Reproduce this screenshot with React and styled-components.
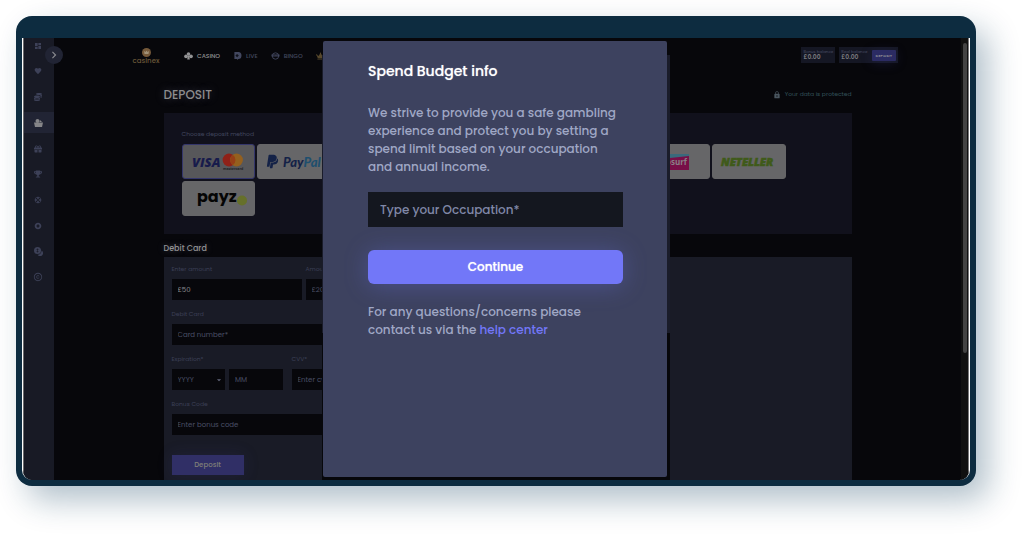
import React from 'react';
import styled, { createGlobalStyle } from 'styled-components';
import { MdDashboard, MdFavorite, MdChevronRight, MdLock, MdArrowDropDown, MdSupport, MdAlbum, MdCopyright } from 'react-icons/md';
import { FaGift, FaTrophy, FaCoins, FaCrown } from 'react-icons/fa';
import { FaPaypal } from 'react-icons/fa6';

const GlobalStyle = createGlobalStyle`
*{
box-sizing:border-box;
}
body{
margin:0;
background:#ffffff;
font-family:Poppins, Inter, "Liberation Sans", sans-serif;
}
button, input, select{
font-family:inherit;
border:0;
margin:0;
}
`;

const Page = styled.div`
display:flex;
height:100vh;
padding:16px 48px 48px 16px;
`;

const Frame = styled.div`
flex:1;
display:flex;
min-width:0;
padding:22px 6px 6px;
border-radius:16px;
background:#0d2c40;
box-shadow:12px 14px 32px rgba(13,60,90,0.32);
`;

const Screen = styled.div`
flex:1;
min-width:0;
display:flex;
position:relative;
overflow:hidden;
border:solid #ffffff;
border-width:0 1px;
border-radius:0 0 10px 10px;
background:#07070b;
`;

const Sidebar = styled.nav`
flex:none;
width:31px;
border-left:1px solid #6c6c6e;
background:#181a25;
`;

const SideList = styled.div`
display:flex;
flex-direction:column;
justify-content:space-between;
height:253px;
margin-top:-3px;
`;

const SideItem = styled.button`
display:flex;
align-items:center;
justify-content:center;
width:100%;
height:21px;
padding:0 2px 0 0;
font-size:8px;
color:${({ $active }) => ($active ? '#858588' : '#3d4158')};
background:${({ $active }) => ($active ? '#212434' : 'transparent')};
`;

const Toggle = styled.button`
position:absolute;
top:8px;
left:22px;
display:flex;
align-items:center;
justify-content:center;
width:18px;
height:18px;
padding:0;
border-radius:50%;
font-size:14px;
color:#8a8b90;
background:#212434;
`;

const Main = styled.main`
flex:1;
min-width:0;
`;

const Header = styled.header`
display:flex;
align-items:center;
height:34px;
padding:0 63px 0 79px;
`;

const Logo = styled.a`
display:flex;
flex-direction:column;
align-items:center;
width:26px;
padding-top:2px;
font-size:7px;
line-height:7px;
font-weight:500;
text-decoration:none;
color:#6b5839;
`;

const Nav = styled.nav`
flex:1;
display:flex;
gap:13px;
margin-left:25px;
padding-top:2px;
`;

const NavLink = styled.a`
display:flex;
align-items:center;
gap:4px;
font-size:6px;
font-weight:500;
text-decoration:none;
color:${({ $active }) => ($active ? '#929294' : '#42475f')};
svg{
width:9px;
height:8px;
}
`;

const Balances = styled.div`
display:flex;
gap:4px;
`;

const Balance = styled.div`
display:flex;
align-items:center;
gap:4px;
height:16px;
padding:0 2px;
white-space:nowrap;
background:#151724;
`;

const BalanceLabel = styled.div`
font-size:4px;
line-height:5px;
color:#4a4e66;
`;

const BalanceValue = styled.div`
font-size:6px;
line-height:7px;
font-weight:600;
color:#7c7c80;
`;

const SmallDeposit = styled.button`
height:11px;
padding:0 4px;
border-radius:1px;
font-size:4px;
font-weight:600;
color:#8a8a92;
background:#2b2b63;
box-shadow:0 2px 12px rgba(60,60,140,0.25);
`;

const Content = styled.div`
max-width:688px;
margin:0 auto;
`;

const TitleRow = styled.div`
display:flex;
align-items:center;
justify-content:space-between;
height:41px;
padding-top:4px;
`;

const Title = styled.h1`
margin:0;
font-size:12px;
font-weight:500;
color:#8c8c8e;
text-shadow:0 0 8px rgba(140,140,160,0.4);
`;

const Protected = styled.div`
display:flex;
align-items:center;
gap:4px;
font-size:6px;
color:#33525a;
svg{
font-size:8px;
color:#4a5660;
}
`;

const Methods = styled.section`
height:121px;
padding:17px 18px;
background:#11111c;
`;

const MethodLabel = styled.div`
height:14px;
font-size:6px;
line-height:8px;
color:#42475f;
`;

const MethodGrid = styled.div`
display:grid;
grid-template-columns:repeat(8, 1fr);
gap:2px;
max-width:604px;
`;

const Method = styled.button`
display:flex;
align-items:center;
justify-content:center;
height:35px;
padding:0;
border:1px solid ${({ $active }) => ($active ? '#34366b' : '#666668')};
border-radius:3px;
overflow:hidden;
background:${({ $active }) => ($active ? '#57575a' : '#666668')};
`;

const MethodArt = styled.svg`
flex:none;
width:72px;
height:33px;
`;

const SectionTitle = styled.h2`
display:flex;
align-items:center;
height:23px;
margin:0;
padding-top:6px;
font-size:8px;
font-weight:500;
color:#929294;
text-shadow:0 0 6px rgba(140,140,160,0.4);
`;

const FormPanel = styled.form`
display:flex;
flex-direction:column;
gap:10px;
height:300px;
padding:8px;
background:#191b26;
`;

const Row = styled.div`
display:flex;
gap:${({ $gap }) => $gap || 4}px;
width:300px;
`;

const Field = styled.div`
display:flex;
flex-direction:column;
gap:6px;
flex:${({ $w }) => ($w ? `0 0 ${$w}px` : 1)};
`;

const Label = styled.label`
font-size:6px;
line-height:8px;
color:#3c4056;
`;

const Input = styled.input`
width:100%;
height:21px;
padding:0 6px;
border-radius:0;
font-size:7px;
color:#8c8c90;
background:#07070b;
&::placeholder{
color:#4a4f66;
opacity:1;
}
`;

const Pair = styled.div`
display:flex;
gap:4px;
`;

const SelectWrap = styled.div`
flex:1;
display:flex;
align-items:center;
padding-right:1px;
font-size:10px;
color:#63677c;
background:#07070b;
`;

const Select = styled.select`
flex:1;
min-width:0;
height:21px;
padding:0 6px;
appearance:none;
font-size:7px;
color:#4a4f66;
background:transparent;
`;

const DepositButton = styled.button`
width:72px;
height:20px;
margin-top:10px;
font-size:7px;
font-weight:500;
color:#7f7f78;
background:#302f66;
box-shadow:0 0 16px rgba(60,60,140,0.2);
`;

const Scrollbar = styled.div`
flex:none;
width:8px;
padding:5px 1px 0 2px;
border-right:1px solid #777779;
background:#101010;
`;

const Thumb = styled.div`
height:71%;
border-radius:2px;
background:#434343;
`;

const Overlay = styled.div`
position:absolute;
inset:0;
display:flex;
justify-content:center;
`;

const Shade = styled.div`
display:flex;
width:348px;
padding:3px 3px 3px 1px;
background:linear-gradient(#07070b 17px, #1a1c2a 17px, #1a1c2a 295px, #07070b 295px);
`;

const Dialog = styled.div`
flex:1;
padding:20px 44px 0 45px;
border-radius:2px;
background:#3d425f;
`;

const DialogTitle = styled.h2`
margin:0 0 23px;
font-size:14px;
line-height:20px;
font-weight:500;
color:#ffffff;
text-shadow:0 0 1px rgba(255,255,255,0.6);
`;

const Text = styled.p`
margin:0;
font-size:12px;
line-height:18px;
font-weight:500;
color:#a0a8c6;
`;

const Occupation = styled.input`
width:100%;
height:35px;
margin:16px 0 23px;
padding:0 12px;
border-radius:0;
font-size:12px;
font-weight:500;
color:#a0a8c6;
background:#14171f;
&::placeholder{
color:#8088a8;
opacity:1;
}
`;

const Continue = styled.button`
display:block;
width:100%;
height:34px;
margin-bottom:19px;
border-radius:6px;
font-size:12px;
font-weight:500;
color:#ffffff;
background:#7277f8;
box-shadow:0 2px 24px rgba(114,119,248,0.3);
text-shadow:0 0 1px rgba(255,255,255,0.8);
`;

const HelpLink = styled.a`
color:#7277f8;
text-decoration:none;
`;

const BasketIcon = () => (
  <svg width="9" height="8" viewBox="0 0 9 8" fill="currentColor">
    <path d="M0 3.500h9l-1 4.500h-7z" />
    <circle cx="3.500" cy="2" r="2" />
    <path d="M6 1l2 2h-2.500z" />
  </svg>
);

const ChipsIcon = () => (
  <svg width="9" height="9" viewBox="0 0 9 9" fill="currentColor">
    <circle cx="3.500" cy="3.500" r="3.500" />
    <path d="M7.500 3.500a3.800 3.800 0 0 1-4 4.200a3 3 0 1 0 4-4.200z" />
    <path d="M3.500 1.500v4M2.500 2.500h2M2.500 4.500h2" stroke="#181a25" strokeWidth=".6" />
  </svg>
);

const SpadesIcon = () => (
  <svg viewBox="0 0 10 9" fill="currentColor">
    <circle cx="5" cy="2.300" r="2" />
    <circle cx="2.200" cy="4.800" r="2.100" />
    <circle cx="7.800" cy="4.800" r="2.100" />
    <path d="M4.300 4h1.400l.8 4.500h-3z" />
  </svg>
);

const LiveIcon = () => (
  <svg viewBox="0 0 9 9">
    <path d="M1 0h4.500a3.500 4 0 0 1 0 8l-1.500 1v-1h-3z" fill="currentColor" />
    <path d="M4 2.200l2 1.800l-2 1.800l-1.800-1.800z" fill="#10121c" />
  </svg>
);

const BingoIcon = () => (
  <svg viewBox="0 0 9 9" fill="none" stroke="currentColor">
    <circle cx="4.500" cy="4.500" r="3.600" />
    <path d="M0 4h9" strokeWidth="2.200" />
    <path d="M1.500 4h6" stroke="#10121c" strokeWidth=".7" strokeDasharray="1 .5" />
  </svg>
);

const sideItems = [
  { name: 'Lobby', icon: <MdDashboard /> },
  { name: 'Favourites', icon: <MdFavorite /> },
  { name: 'Games', icon: <FaCoins /> },
  { name: 'Deposit', icon: <BasketIcon />, active: true },
  { name: 'Gifts', icon: <FaGift /> },
  { name: 'Tournaments', icon: <FaTrophy /> },
  { name: 'Support', icon: <MdSupport /> },
  { name: 'Rewards', icon: <MdAlbum /> },
  { name: 'Chips', icon: <ChipsIcon /> },
  { name: 'Coins', icon: <MdCopyright size={10} /> },
];

const VisaArt = () => (
  <MethodArt viewBox="0 0 72 33">
    <text x="10" y="22" fontFamily="Open Sans" fontSize="13" fontWeight="800" fontStyle="italic" fill="#171b4b">VISA</text>
    <circle cx="47" cy="15" r="6.400" fill="#8f2118" />
    <circle cx="54.500" cy="15" r="6.400" fill="#94601e" />
    <path d="M50.800 9.800a6.400 6.400 0 0 1 0 10.400a6.400 6.400 0 0 1 0-10.400z" fill="#963f16" />
    <text x="41" y="25" fontFamily="Open Sans" fontSize="3.500" fontWeight="700" fill="#201f24">mastercard</text>
  </MethodArt>
);

const PaypalArt = () => (
  <MethodArt viewBox="0 0 72 33">
    <FaPaypal x="7" y="9" size="15" color="#142247" />
    <text x="25" y="22" fontFamily="Lato" fontSize="13" fontWeight="900" fontStyle="italic" fill="#142247">
      Pay<tspan fill="#1f4f6e">Pal</tspan>
    </text>
  </MethodArt>
);

const NeosurfArt = () => (
  <MethodArt viewBox="0 0 72 33">
    <path d="M14 9h38v16H14z" fill="#780f48" />
    <path d="M14 9h38v2l-38 4z" fill="#3a6a7c" />
    <text x="19" y="20" fontFamily="Open Sans" fontSize="8" fontWeight="700" fill="#8a7f86">neosurf</text>
  </MethodArt>
);

const NetellerArt = () => (
  <MethodArt viewBox="0 0 72 33">
    <text x="8" y="21" fontFamily="Open Sans" fontSize="11" fontWeight="800" fontStyle="italic" fill="#3f5a1a" stroke="#3f5a1a" strokeWidth=".6">NETELLER</text>
  </MethodArt>
);

const PayzArt = () => (
  <MethodArt viewBox="0 0 72 33">
    <text x="15" y="20" fontFamily="Poppins" fontSize="16" fontWeight="700" fill="#050505">payz</text>
    <circle cx="60" cy="18.500" r="5" fill="#66702a" />
  </MethodArt>
);

const methods = [
  { name: 'Visa and Mastercard', art: <VisaArt />, active: true },
  { name: 'PayPal', art: <PaypalArt /> },
  { name: 'Bank transfer' },
  { name: 'Skrill' },
  { name: 'Voucher' },
  { name: 'Paysafecard' },
  { name: 'Neosurf', art: <NeosurfArt /> },
  { name: 'Neteller', art: <NetellerArt /> },
  { name: 'Payz', art: <PayzArt /> },
];

const TopBar = () => (
  <Header>
    <Logo href="#">
      <svg width="9" height="9" viewBox="0 0 9 9">
        <circle cx="4.500" cy="4.500" r="4.500" fill="#75593a" />
        <path d="M2 3l1.500 1l1-1.500l1 1.500l1.500-1l-.5 3h-4z" fill="#a09178" />
      </svg>
      casinex
    </Logo>
    <Nav>
      <NavLink href="#" $active><SpadesIcon />CASINO</NavLink>
      <NavLink href="#"><LiveIcon />LIVE</NavLink>
      <NavLink href="#"><BingoIcon />BINGO</NavLink>
      <NavLink href="#" aria-label="Promotions"><FaCrown color="#57482c" /></NavLink>
    </Nav>
    <Balances>
      <Balance>
        <div>
          <BalanceLabel>Bonus balance</BalanceLabel>
          <BalanceValue>£0.00</BalanceValue>
        </div>
      </Balance>
      <Balance>
        <div>
          <BalanceLabel>Real balance</BalanceLabel>
          <BalanceValue>£0.00</BalanceValue>
        </div>
        <SmallDeposit>DEPOSIT</SmallDeposit>
      </Balance>
    </Balances>
  </Header>
);

const DepositForm = () => (
  <FormPanel>
    <Row>
      <Field $w={130}>
        <Label htmlFor="amount">Enter amount</Label>
        <Input id="amount" defaultValue="£50" />
      </Field>
      <Field>
        <Label htmlFor="preset">Amount</Label>
        <Input id="preset" placeholder="£20" />
      </Field>
    </Row>
    <Row>
      <Field>
        <Label htmlFor="card">Debit Card</Label>
        <Input id="card" placeholder="Card number*" />
      </Field>
    </Row>
    <Row $gap={9}>
      <Field $w={111}>
        <Label htmlFor="year">Expiration*</Label>
        <Pair>
          <SelectWrap>
            <Select id="year"><option>YYYY</option></Select>
            <MdArrowDropDown />
          </SelectWrap>
          <SelectWrap>
            <Select aria-label="Month"><option>MM</option></Select>
          </SelectWrap>
        </Pair>
      </Field>
      <Field>
        <Label htmlFor="cvv">CVV*</Label>
        <Input id="cvv" placeholder="Enter cvv" />
      </Field>
    </Row>
    <Row>
      <Field>
        <Label htmlFor="bonus">Bonus Code</Label>
        <Input id="bonus" placeholder="Enter bonus code" />
      </Field>
    </Row>
    <DepositButton type="button">Deposit</DepositButton>
  </FormPanel>
);

const SpendBudget = () => (
  <Overlay>
    <Shade>
      <Dialog role="dialog" aria-labelledby="budget-title">
        <DialogTitle id="budget-title">Spend Budget info</DialogTitle>
        <Text>
          We strive to provide you a safe gambling<br />
          experience and protect you by setting a<br />
          spend limit based on your occupation<br />
          and annual income.
        </Text>
        <Occupation aria-label="Occupation" placeholder="Type your Occupation*" />
        <Continue>Continue</Continue>
        <Text>
          For any questions/concerns please<br />
          contact us via the <HelpLink href="#">help center</HelpLink>
        </Text>
      </Dialog>
    </Shade>
  </Overlay>
);

const App = () => {
  return (
    <Page>
      <GlobalStyle />
      <Frame>
        <Screen>
          <Sidebar>
            <SideList>
              {sideItems.map((item) => (
                <SideItem key={item.name} aria-label={item.name} $active={item.active}>
                  {item.icon}
                </SideItem>
              ))}
            </SideList>
          </Sidebar>
          <Toggle aria-label="Open menu"><MdChevronRight /></Toggle>
          <Main>
            <TopBar />
            <Content>
              <TitleRow>
                <Title>DEPOSIT</Title>
                <Protected><MdLock />Your data is protected</Protected>
              </TitleRow>
              <Methods>
                <MethodLabel>Choose deposit method</MethodLabel>
                <MethodGrid>
                  {methods.map((m) => (
                    <Method key={m.name} aria-label={m.name} $active={m.active}>{m.art}</Method>
                  ))}
                </MethodGrid>
              </Methods>
              <SectionTitle>Debit Card</SectionTitle>
              <DepositForm />
            </Content>
          </Main>
          <Scrollbar><Thumb /></Scrollbar>
          <SpendBudget />
        </Screen>
      </Frame>
    </Page>
  );
};

export default App;
